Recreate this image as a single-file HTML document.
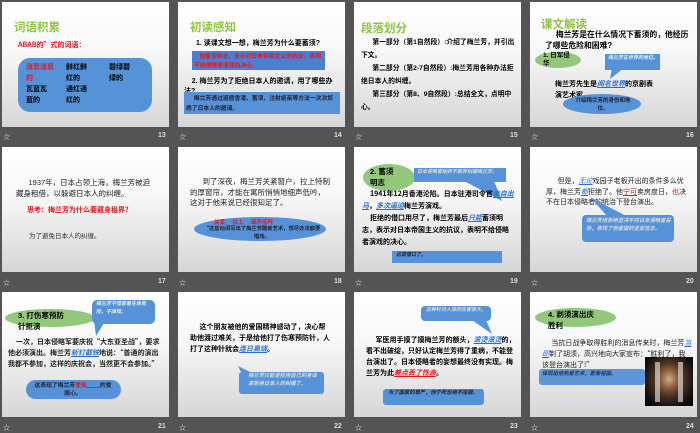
<!DOCTYPE html>
<html><head><meta charset="utf-8"><style>
*{margin:0;padding:0;box-sizing:border-box}
body{width:700px;height:431px;background:#545454;position:relative;overflow:hidden;font-family:"Liberation Sans","Noto Sans CJK SC",sans-serif}
.s{position:absolute;width:167px;height:125px;background:linear-gradient(#fff 0%,#f7f7f7 40%,#d6d6d6 100%);overflow:hidden}
.s *{position:absolute}
.cap{position:absolute;color:#ddd;font-size:7px;font-weight:bold}
.t{color:#8cc63f;font-size:11.5px;font-weight:bold;white-space:nowrap}
.tx{font-size:7px;line-height:10px;color:#000;font-weight:bold;font-family:"Noto Sans CJK SC","WenQuanYi Zen Hei",sans-serif}
.sn{font-family:"Liberation Sans","Noto Sans CJK SC",sans-serif}
.b{background:#5592d8}
.bl{color:#2a6fd0;text-decoration:underline;font-style:italic}
.r{color:#e8141c}
.g{background:#93c77a;border-radius:50%}
.w{white-space:nowrap}
</style></head><body>

<!-- 13 -->
<div class="s" style="left:2px;top:2px">
<div class="t" style="left:12px;top:17px">词语积累</div>
<div class="tx r w" style="left:16px;top:38px">ABAB的”式的词语：</div>
<div class="b" style="left:16px;top:56px;width:134px;height:54px;border-radius:12px"></div>
<div class="tx" style="left:24px;top:60px;line-height:11px;width:38px"><span class="r" style="position:static">涨袞涨袞<br>的</span><br>瓦蓝瓦<br>蓝的</div>
<div class="tx" style="left:64px;top:60px;line-height:11px;width:36px">鲜红鲜<br>红的<br>通红通<br>红的</div>
<div class="tx" style="left:107px;top:60px;line-height:11px;width:36px">碧绿碧<br>绿的</div>
</div>
<div class="cap" style="left:3px;top:132px">☆</div><div class="cap" style="left:158px;top:132px">13</div>

<!-- 14 -->
<div class="s" style="left:178px;top:2px">
<div class="t" style="left:12px;top:17px">初读感知</div>
<div class="tx sn w" style="left:18px;top:37px">1. 读课文想一想，梅兰芳为什么要蓄须?</div>
<div class="b" style="left:14px;top:49px;width:133px;height:19px;background:#4a7fd3"></div>
<div class="tx r" style="left:16px;top:49px;width:130px;font-size:5.8px;line-height:9px">&nbsp;&nbsp;&nbsp;&nbsp;他蓄须明志，表示对日本帝国主义的抗议，表明不给侵略者演戏的决心。</div>
<div class="tx sn" style="left:6px;top:75px;width:158px;line-height:10px">&nbsp;&nbsp;&nbsp;&nbsp;2. 梅兰芳为了拒绝日本人的邀请，用了哪些办法?</div>
<div class="b" style="left:6px;top:90px;width:156px;height:22px"></div>
<div class="tx" style="left:8px;top:91px;width:152px;font-size:5.8px;line-height:10px;color:#223">&nbsp;&nbsp;&nbsp;&nbsp;&nbsp;&nbsp;梅兰芳通过避居香港、蓄须、注射疫苗等方法一次次拒绝了日本人的邀请。</div>
</div>
<div class="cap" style="left:179px;top:132px">☆</div><div class="cap" style="left:334px;top:132px">14</div>

<!-- 15 -->
<div class="s" style="left:354px;top:2px">
<div class="t" style="left:7px;top:18px">段落划分</div>
<div class="tx sn" style="left:7px;top:34px;width:154px;line-height:13px;font-size:6.8px">&nbsp;&nbsp;&nbsp;&nbsp;&nbsp;&nbsp;第一部分（第1自然段）:介绍了梅兰芳，并引出下文。<br>&nbsp;&nbsp;&nbsp;&nbsp;&nbsp;&nbsp;第二部分（第2-7自然段）:梅兰芳用各种办法拒绝日本人的纠缠。<br>&nbsp;&nbsp;&nbsp;&nbsp;&nbsp;&nbsp;第三部分（第8、9自然段）:总结全文，点明中心。</div>
</div>
<div class="cap" style="left:355px;top:132px">☆</div><div class="cap" style="left:510px;top:132px">15</div>

<!-- 16 -->
<div class="s" style="left:530px;top:2px">
<div class="t" style="left:11px;top:14px">课文解读</div>
<div class="tx sn" style="left:15px;top:27px;width:150px;font-size:7.8px;line-height:11px">&nbsp;&nbsp;&nbsp;&nbsp;&nbsp;梅兰芳是在什么情况下蓄须的，他经历了哪些危险和困难?</div>
<div class="g" style="left:5px;top:50px;width:46px;height:16px"></div>
<div class="tx sn w" style="left:13px;top:50px;font-size:6.5px;line-height:8px">1. 日军侵<br>华</div>
<div class="b" style="left:75px;top:52px;width:55px;height:16px"></div>
<svg style="left:80px;top:66px" width="20" height="12"><polygon points="2,0 14,0 0,11" fill="#5592d8"/></svg>
<div class="tx" style="left:78px;top:52px;width:50px;font-size:5px;line-height:7px;color:#eee;font-style:italic">梅兰芳在世界的地位。</div>
<div class="tx w" style="left:25px;top:77px;font-size:7px;line-height:11px">梅兰芳先生是<span class="bl" style="position:static">闻名世界</span>的京剧表<br>演艺术家</div>
<div class="b" style="left:33px;top:92px;width:78px;height:20px;border-radius:50%"></div>
<div class="tx" style="left:42px;top:94px;width:62px;font-size:5.5px;line-height:8px;text-align:center;color:#223">介绍梅兰芳的身份和地位。</div>
</div>
<div class="cap" style="left:531px;top:132px">☆</div><div class="cap" style="left:686px;top:132px">16</div>

<!-- 17 -->
<div class="s" style="left:2px;top:147px">
<div class="tx sn" style="left:14px;top:30px;width:135px;font-size:7.5px;line-height:11px;font-weight:normal;color:#222">&nbsp;&nbsp;&nbsp;&nbsp;&nbsp;&nbsp;1937年，日本占领上海，梅兰芳被迫藏身租借，以躲避日本人的纠缠。</div>
<div class="tx r" style="left:25px;top:58px;width:110px;font-size:7px;line-height:11px">思考：梅兰芳为什么要藏身租界?</div>
<div class="tx" style="left:27px;top:83px;width:80px;font-size:6.5px;line-height:11px;font-weight:normal;color:#333">为了避免日本人的纠缠。</div>
</div>
<div class="cap" style="left:3px;top:278px">☆</div><div class="cap" style="left:158px;top:278px">17</div>

<!-- 18 -->
<div class="s" style="left:178px;top:147px">
<div class="tx sn" style="left:12px;top:30px;width:140px;font-size:7.5px;line-height:10.5px;font-weight:normal;color:#222">&nbsp;&nbsp;&nbsp;&nbsp;&nbsp;&nbsp;到了深夜，梅兰芳关紧窗户，拉上特制的厚窗帘，才能在寓所悄悄地细声低吟，这对于他来说已经很知足了。</div>
<div class="b" style="left:16px;top:70px;width:132px;height:24px;border-radius:50%"></div>
<div class="tx r w" style="left:36px;top:70px;font-size:5.5px">关紧&nbsp;&nbsp;&nbsp;&nbsp;&nbsp;&nbsp;拉上&nbsp;&nbsp;&nbsp;&nbsp;&nbsp;&nbsp;细声低吟</div>
<div class="tx" style="left:24px;top:77px;width:120px;font-size:5.3px;line-height:8px;color:#223;text-align:center">“这些动词写出了梅兰芳酷爱艺术，想尽办法都要唱戏。</div>
</div>
<div class="cap" style="left:179px;top:278px">☆</div><div class="cap" style="left:334px;top:278px">18</div>

<!-- 19 -->
<div class="s" style="left:354px;top:147px">
<div class="g" style="left:9px;top:17px;width:52px;height:27px"></div>
<div class="tx sn w" style="left:16px;top:19px;font-size:7.5px;line-height:11px">2. 蓄须<br>明志</div>
<div class="b" style="left:60px;top:21px;width:92px;height:14px"></div>
<div class="tx" style="left:63px;top:21px;width:88px;font-size:5px;line-height:7px;color:#ddd;font-style:italic">日本侵略者始终不放弃纠缠梅兰芳。</div>
<svg style="left:110px;top:34px" width="40" height="22"><polygon points="0,0 30,0 38,20" fill="#5592d8"/></svg>
<div class="tx" style="left:8px;top:41px;width:152px;font-size:7px;line-height:12px">&nbsp;&nbsp;&nbsp;&nbsp;&nbsp;1941年12月香港沦陷。日本驻港司令官<span class="bl" style="position:static">亲自出马</span>，<span class="bl" style="position:static">多次逼迫</span>梅兰芳演戏。<br>&nbsp;&nbsp;&nbsp;&nbsp;&nbsp;拒绝的借口用尽了，梅兰芳最后<span class="bl" style="position:static">只能</span>蓄须明志，表示对日本帝国主义的抗议，表明不给侵略者演戏的决心。</div>
<div class="b" style="left:38px;top:104px;width:110px;height:12px"></div>
<div class="tx" style="left:42px;top:104px;font-size:5px;line-height:8px;color:#223;font-style:italic" >这是借口了。</div>
</div>
<div class="cap" style="left:355px;top:278px">☆</div><div class="cap" style="left:510px;top:278px">19</div>

<!-- 20 -->
<div class="s" style="left:530px;top:147px">
<div class="tx sn" style="left:16px;top:30px;width:140px;font-size:7px;line-height:10.5px;font-weight:normal;color:#222">&nbsp;&nbsp;&nbsp;&nbsp;&nbsp;&nbsp;但是，<span class="bl" style="position:static">无论</span>戏园子老板开出的条件多么优厚，梅兰芳<span class="bl" style="position:static">都</span>拒绝了。他<span class="r" style="position:static;text-decoration:underline">宁可</span>卖房度日，<span class="r" style="position:static">也</span>决不在日本侵略者的统治下登台演出。</div>
<svg style="left:60px;top:50px" width="40" height="22"><polygon points="0,0 18,20 38,20" fill="#5592d8"/></svg>
<div class="b" style="left:52px;top:68px;width:92px;height:27px;border-radius:4px"></div>
<div class="tx" style="left:56px;top:69px;width:86px;font-size:5.3px;line-height:8px;color:#ddd;font-style:italic">梅兰芳用拒绝坚决不向日本侵略者妥协，表现了他爱国的坚定信念。</div>
</div>
<div class="cap" style="left:531px;top:278px">☆</div><div class="cap" style="left:686px;top:278px">20</div>

<!-- 21 -->
<div class="s" style="left:2px;top:292px">
<div class="g" style="left:3px;top:17px;width:90px;height:18px"></div>
<div class="tx sn w" style="left:16px;top:18px;font-size:7.5px;line-height:11px">3. 打伤寒预防<br>针拒演</div>
<div class="b" style="left:90px;top:8px;width:63px;height:24px;border-radius:5px"></div>
<div class="tx" style="left:94px;top:8px;width:58px;font-size:5px;line-height:7.5px;color:#eee;font-style:italic">梅兰芳不惜冒着生命危险，不演戏。</div>
<svg style="left:92px;top:28px" width="14" height="18"><polygon points="0,0 12,0 2,16" fill="#5592d8"/></svg>
<div class="tx" style="left:6px;top:45px;width:152px;font-size:7px;line-height:11px;color:#222">&nbsp;&nbsp;&nbsp;&nbsp;&nbsp;一次，日本侵略军要庆祝“大东亚圣战”，要求他必须演出。梅兰芳<span class="bl" style="position:static">斩钉截铁</span>地说：“普通的演出我都不参加，这样的庆祝会，当然更不会参加。”</div>
<div class="b" style="left:24px;top:88px;width:95px;height:19px;border-radius:10px"></div>
<div class="tx" style="left:30px;top:89px;width:82px;font-size:5.8px;line-height:8px;color:#223;text-align:center">这表现了梅兰芳<span class="r" style="position:static">爱国</span>____的爱国心。</div>
</div>
<div class="cap" style="left:3px;top:423px">☆</div><div class="cap" style="left:158px;top:423px">21</div>

<!-- 22 -->
<div class="s" style="left:178px;top:292px">
<div class="tx" style="left:12px;top:30px;width:142px;font-size:7px;line-height:11px">&nbsp;&nbsp;&nbsp;&nbsp;&nbsp;&nbsp;这个朋友被他的爱国精神感动了，决心帮助他渡过难关，于是给他打了伤寒预防针，人打了这种针就会<span class="bl" style="position:static">连日高烧</span>。</div>
<svg style="left:60px;top:74px" width="20" height="14"><polygon points="0,0 16,8 6,12" fill="#5592d8"/></svg>
<div class="b" style="left:61px;top:80px;width:85px;height:22px;border-radius:3px"></div>
<div class="tx" style="left:70px;top:80px;width:74px;font-size:5.3px;line-height:7.5px;color:#ddd;font-style:italic">梅兰芳只能冒险用自己的身体来拒绝日本人的纠缠了。</div>
</div>
<div class="cap" style="left:179px;top:423px">☆</div><div class="cap" style="left:334px;top:423px">22</div>

<!-- 23 -->
<div class="s" style="left:354px;top:292px">
<div class="b" style="left:67px;top:14px;width:70px;height:15px;border-radius:4px"></div>
<div class="tx" style="left:72px;top:14px;width:62px;font-size:5px;line-height:7px;color:#ddd;font-style:italic">这种针对人体的伤害很大。</div>
<svg style="left:118px;top:28px" width="22" height="16"><polygon points="0,0 14,0 20,14" fill="#5592d8"/></svg>
<div class="tx" style="left:12px;top:43px;width:152px;font-size:7px;line-height:11px">&nbsp;&nbsp;&nbsp;&nbsp;&nbsp;&nbsp;军医用手摸了摸梅兰芳的额头，<span class="bl" style="position:static">滚烫滚烫</span>的，看不出破绽，只好认定梅兰芳得了重病，不能登台演出了。日本侵略者的妄想最终没有实现。梅兰芳为此<span class="r" style="position:static;text-decoration:underline;font-style:italic">差点丢了性命</span>。</div>
<div class="b" style="left:29px;top:97px;width:101px;height:16px;border-radius:3px"></div>
<div class="tx" style="left:34px;top:97px;width:94px;font-size:5.3px;line-height:7.5px;color:#223;font-style:italic">为了国家的尊严，他宁死也绝不屈服。</div>
</div>
<div class="cap" style="left:355px;top:423px">☆</div><div class="cap" style="left:510px;top:423px">23</div>

<!-- 24 -->
<div class="s" style="left:530px;top:292px">
<div class="g" style="left:5px;top:16px;width:81px;height:19px"></div>
<div class="tx sn w" style="left:18px;top:17px;font-size:7.5px;line-height:11px">4. 剃须演出庆<br>胜利</div>
<div class="tx" style="left:12px;top:46px;width:150px;font-size:7px;line-height:11px;font-weight:normal;color:#222">&nbsp;&nbsp;&nbsp;&nbsp;&nbsp;&nbsp;当抗日战争取得胜利的消息传来时，梅兰芳<span class="bl" style="position:static">当即</span>剃了胡须，高兴地向大家宣布：“胜利了，我该登台演出了!”</div>
<div class="b" style="left:9px;top:77px;width:106px;height:16px;border-radius:3px;opacity:.95"></div>
<div class="tx" style="left:12px;top:78px;width:100px;font-size:5.3px;line-height:7.5px;color:#235;font-style:italic">体现出他热爱艺术，更爱祖国。</div>
<div style="left:115px;top:65px;width:48px;height:49px;background:radial-gradient(ellipse at 50% 45%,#c8b090 0%,#8a5a3a 25%,#4a3020 45%,#151010 75%,#000 100%)"></div>
<div style="left:125px;top:70px;width:28px;height:40px;background:linear-gradient(90deg,#eee 0 18%,transparent 18% 82%,#eee 82%);opacity:.6"></div>
</div>
<div class="cap" style="left:531px;top:423px">☆</div><div class="cap" style="left:686px;top:423px">24</div>

</body></html>
